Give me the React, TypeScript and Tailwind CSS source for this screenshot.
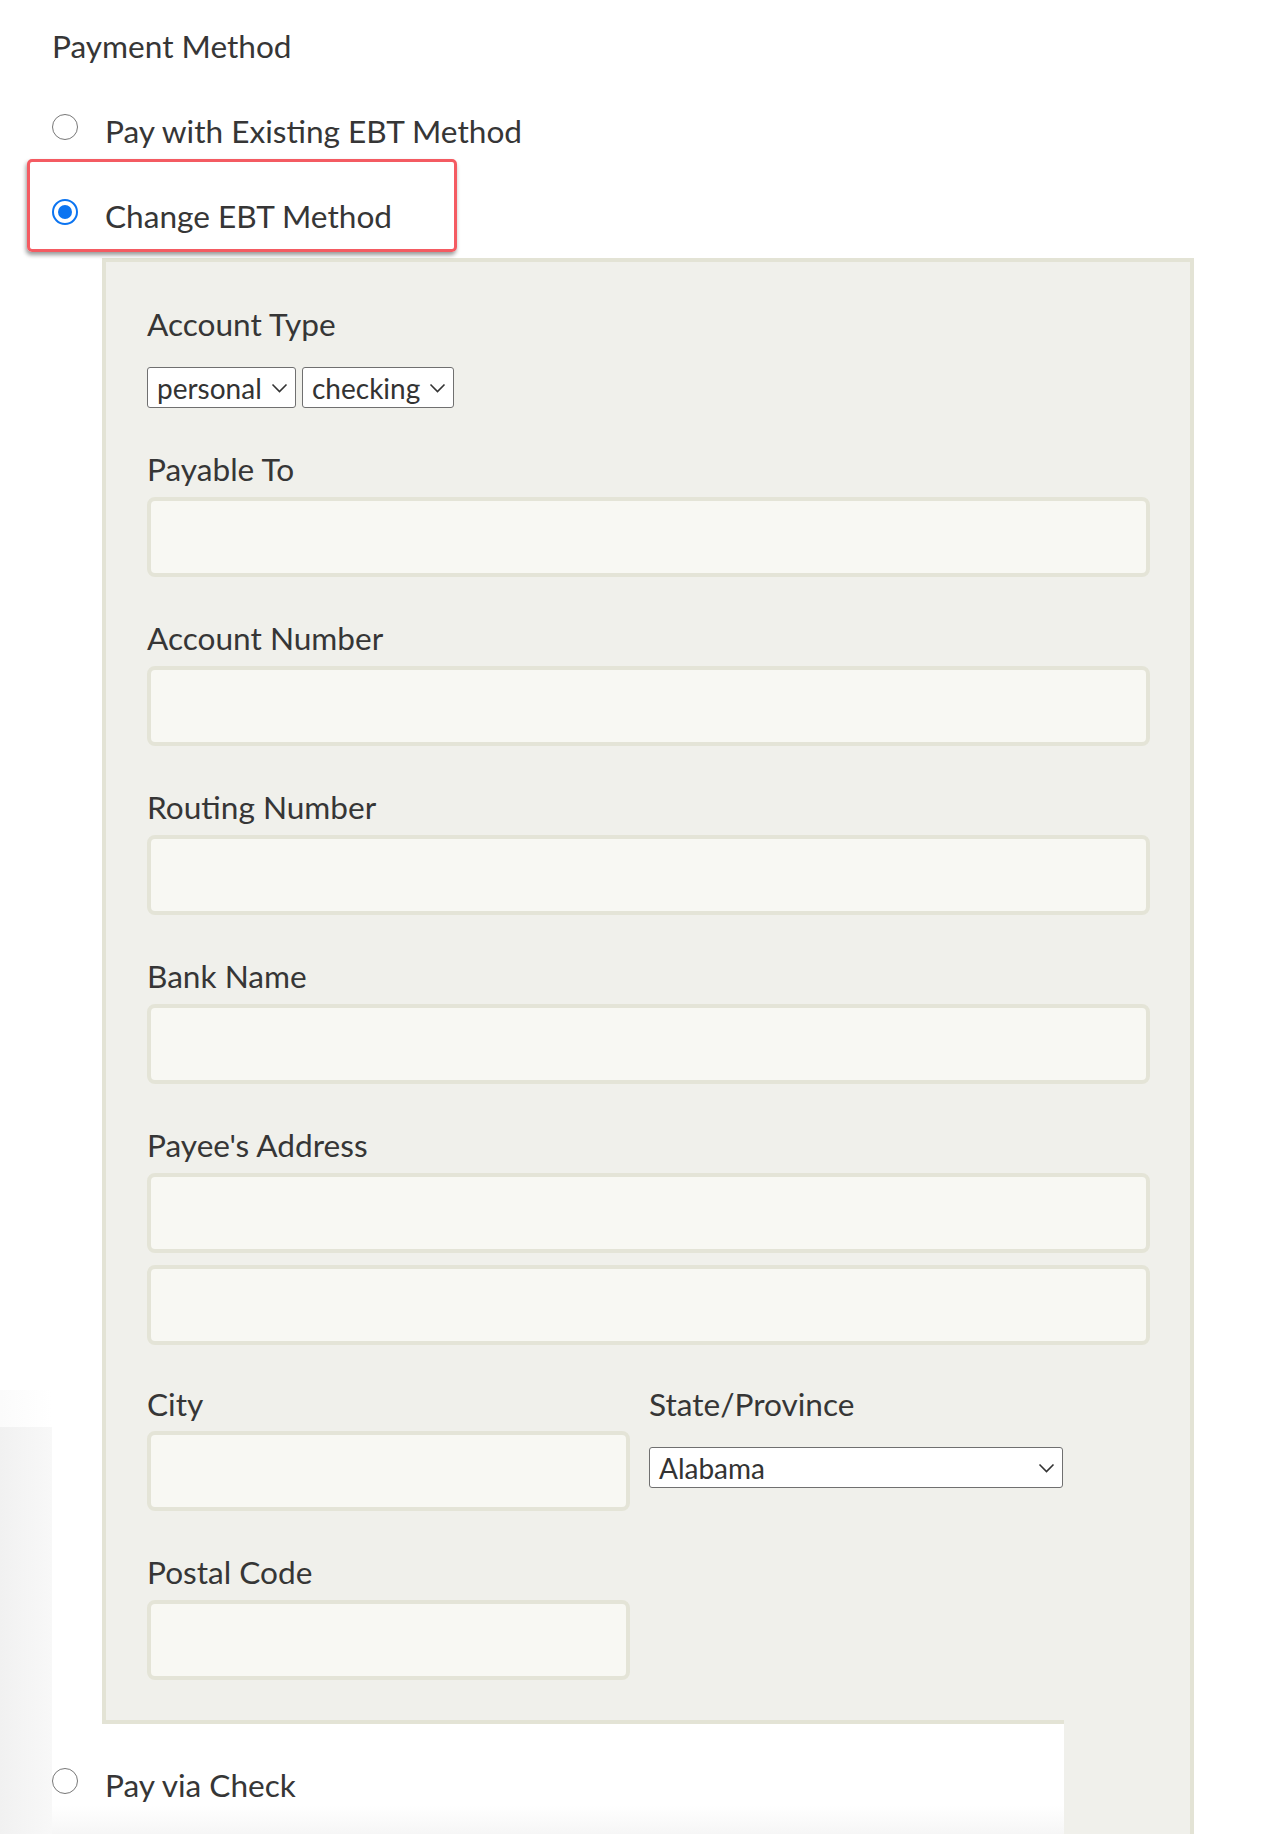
import React from "react";

const font = { fontFamily: "Lato, 'Open Sans', 'Liberation Sans', sans-serif" };

function Radio({ checked }: { checked?: boolean }) {
  if (checked) {
    return (
      <span className="mt-[2px] flex h-[26px] w-[26px] shrink-0 items-center justify-center rounded-full border-[2.5px] border-[#0b74f1] bg-white">
        <span className="h-[14px] w-[14px] rounded-full bg-[#0b74f1]" />
      </span>
    );
  }
  return (
    <span className="mt-[2px] block h-[26px] w-[26px] shrink-0 rounded-full border-[1.5px] border-[#777777] bg-white" />
  );
}

function Chevron() {
  return (
    <svg width="17" height="10" viewBox="0 0 17 10" className="shrink-0">
      <path d="M1.5 1.5 L8.5 8.5 L15.5 1.5" fill="none" stroke="#333" strokeWidth="1.6" />
    </svg>
  );
}

function FakeSelect({ value, width }: { value: string; width: string }) {
  return (
    <div
      className={`flex h-[41px] items-center justify-between rounded-[3px] border-[1.5px] border-[#707070] bg-white pl-[9px] pr-[7px] text-[28px] leading-[38px] text-[#333] ${width}`}
    >
      <span>{value}</span>
      <Chevron />
    </div>
  );
}

function Field({ label }: { label: string }) {
  return (
    <div className="mt-[42px]">
      <p className="text-[31.6px] leading-[38px] text-[#363636]">{label}</p>
      <div className="mt-[9px] h-[80px] w-full rounded-[8px] border-4 border-[#e4e4d7] bg-[#f8f8f3]" />
    </div>
  );
}

export default function App() {
  return (
    <div className="flex min-h-[1834px] w-full bg-white text-[#363636]" style={font}>
      <div className="flex w-[52px] shrink-0 flex-col">
        <div className="h-[1390px]" />
        <div className="h-[37px] bg-gradient-to-r from-[#fbfbfb] to-white" />
        <div className="flex-1 bg-gradient-to-r from-[#f1f1f1] to-[#f8f8f8]" />
      </div>

      <div className="flex flex-1 flex-col">
        <p className="pt-[27px] text-[31.6px] leading-[38px]">Payment Method</p>

        <div className="mt-[47px] flex items-start gap-[27px]">
          <Radio />
          <span className="text-[31.6px] leading-[38px]">Pay with Existing EBT Method</span>
        </div>

        <div className="relative mt-[47px] flex items-start gap-[27px]">
          <Radio checked />
          <span className="text-[31.6px] leading-[38px]">Change EBT Method</span>
          <div className="pointer-events-none absolute left-[-25px] top-[-38px] h-[93px] w-[430px] rounded-[5px] border-[3.5px] border-[#f45b62] shadow-[-1px_3px_4px_rgba(0,0,0,0.4)]" />
        </div>

        <div className="ml-[50px] mt-[23px] w-[1092px] border-4 border-b-0 border-[#e3e3d5] bg-[#f0f0eb] pb-[40px] pl-[41px] pr-[40px] pt-[43px]">
          <p className="text-[31.6px] leading-[38px]">Account Type</p>
          <div className="mt-[24px] flex gap-[6px]">
            <FakeSelect value="personal" width="w-[149px]" />
            <FakeSelect value="checking" width="w-[152px]" />
          </div>

          <Field label="Payable To" />
          <Field label="Account Number" />
          <Field label="Routing Number" />
          <Field label="Bank Name" />

          <div className="mt-[42px]">
            <p className="text-[31.6px] leading-[38px]">Payee's Address</p>
            <div className="mt-[9px] h-[80px] w-full rounded-[8px] border-4 border-[#e4e4d7] bg-[#f8f8f3]" />
            <div className="mt-[12px] h-[80px] w-full rounded-[8px] border-4 border-[#e4e4d7] bg-[#f8f8f3]" />
          </div>

          <div className="mt-[40px] flex gap-[19px]">
            <div className="w-[483px]">
              <p className="text-[31.6px] leading-[38px]">City</p>
              <div className="mt-[8px] h-[80px] w-full rounded-[8px] border-4 border-[#e4e4d7] bg-[#f8f8f3]" />
            </div>
            <div>
              <p className="text-[31.6px] leading-[38px]">State/Province</p>
              <div className="mt-[24px]">
                <FakeSelect value="Alabama" width="w-[414px]" />
              </div>
            </div>
          </div>

          <div className="mt-[42px]">
            <p className="text-[31.6px] leading-[38px]">Postal Code</p>
            <div className="mt-[9px] h-[80px] w-[483px] rounded-[8px] border-4 border-[#e4e4d7] bg-[#f8f8f3]" />
          </div>
        </div>

        <div className="flex flex-1">
          <div className="flex w-[1012px] flex-col bg-gradient-to-b from-white from-[75%] to-[#f6f6f6]">
            <div className="ml-[50px] h-1 bg-[#e3e3d5]" />
            <div className="mt-[42px] flex items-start gap-[27px]">
              <Radio />
              <span className="text-[31.6px] leading-[38px]">Pay via Check</span>
            </div>
          </div>
          <div className="w-[130px] border-r-4 border-[#e3e3d5] bg-[#f0f0eb]" />
        </div>
      </div>
    </div>
  );
}
